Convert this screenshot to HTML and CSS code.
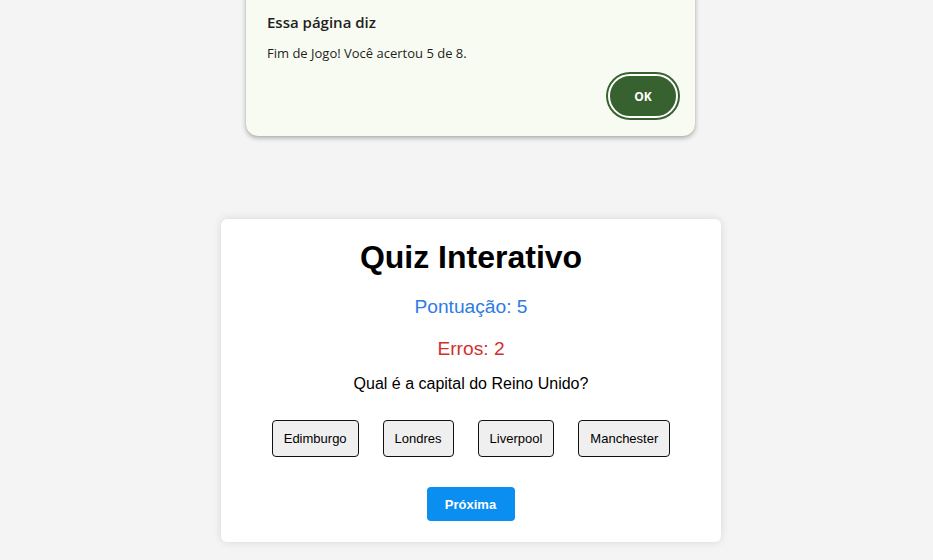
FILE: index.html
```html
<!DOCTYPE html>
<html lang="pt-BR">
<head>
<meta charset="utf-8">
<title>Quiz Interativo</title>
<link rel="stylesheet" href="styles.css">
</head>
<body>
<div class="dialog">
  <div class="dialog-title">Essa página diz</div>
  <div class="dialog-msg">Fim de Jogo! Você acertou 5 de 8.</div>
  <div class="dialog-actions"><button class="ok">OK</button></div>
</div>
<main class="stage">
  <section class="card">
    <h1 class="title">Quiz Interativo</h1>
    <p class="score">Pontuação: 5</p>
    <p class="errors">Erros: 2</p>
    <p class="question">Qual é a capital do Reino Unido?</p>
    <div class="options">
      <button class="opt">Edimburgo</button>
      <button class="opt">Londres</button>
      <button class="opt">Liverpool</button>
      <button class="opt">Manchester</button>
    </div>
    <button class="next">Próxima</button>
  </section>
</main>
</body>
</html>
```
FILE: styles.css
```css
html, body { margin: 0; padding: 0; }
body {
  background: #f4f4f4;
  font-family: "Liberation Sans", Arial, sans-serif;
  width: 933px;
  height: 560px;
  overflow: hidden;
  position: relative;
}
.dialog {
  position: absolute;
  left: 246px;
  top: -20px;
  width: 449px;
  height: 156px;
  box-sizing: border-box;
  background: #f8fbf1;
  border-radius: 12px;
  box-shadow: 0 2px 5px rgba(0,0,0,0.3), 0 0 1px rgba(0,0,0,0.2);
  padding: 32px 21px 0 21px;
  font-family: "Open Sans", "Noto Sans", sans-serif;
  color: #1f1f1f;
}
.dialog-title { font-size: 15px; font-weight: 600; line-height: 20px; }
.dialog-msg { font-size: 13px; line-height: 16px; margin-top: 13px; }
.dialog-actions { display: flex; justify-content: flex-end; margin-top: 13px; margin-right: -4px; }
.ok {
  width: 70px; height: 44px;
  border-radius: 22px;
  background: #37612f;
  color: #fff;
  font-family: "Open Sans", "Noto Sans", sans-serif;
  font-weight: 700;
  font-size: 12px;
  border: 2px solid #fff;
  box-shadow: 0 0 0 2px #37612f;
  padding: 0;
}
.stage {
  display: flex;
  justify-content: center;
  padding-top: 219px;
  padding-left: 9px;
}
.card {
  width: 500px;
  box-sizing: border-box;
  background: #fff;
  border-radius: 6px;
  box-shadow: 0 0 8px rgba(0,0,0,0.12);
  padding: 20px 20px 21px;
  display: flex;
  flex-direction: column;
  align-items: center;
  text-align: center;
}
.title { font-size: 32px; font-weight: 700; margin: 0; line-height: 37px; color: #000; }
.score { font-size: 19.2px; color: #2d7be5; margin: 19px 0 0; line-height: 23px; }
.errors { font-size: 19.2px; color: #d0312d; margin: 19px 0 0; line-height: 23px; }
.question { font-size: 16px; color: #000; margin: 15px 0 0; line-height: 18px; }
.options { display: flex; justify-content: center; gap: 24px; margin-top: 27px; }
.opt {
  font-family: "Liberation Sans", Arial, sans-serif;
  font-size: 13px;
  line-height: 15px;
  padding: 10px 11px;
  background: #efefef;
  border: 1px solid #111;
  border-radius: 4px;
  color: #000;
}
.next {
  margin-top: 30px;
  font-family: "Liberation Sans", Arial, sans-serif;
  font-size: 13px;
  font-weight: 700;
  line-height: 15px;
  padding: 10px 19px 9px 18px;
  background: #0a8ef0;
  color: #fff;
  border: none;
  border-radius: 4px;
}
```
